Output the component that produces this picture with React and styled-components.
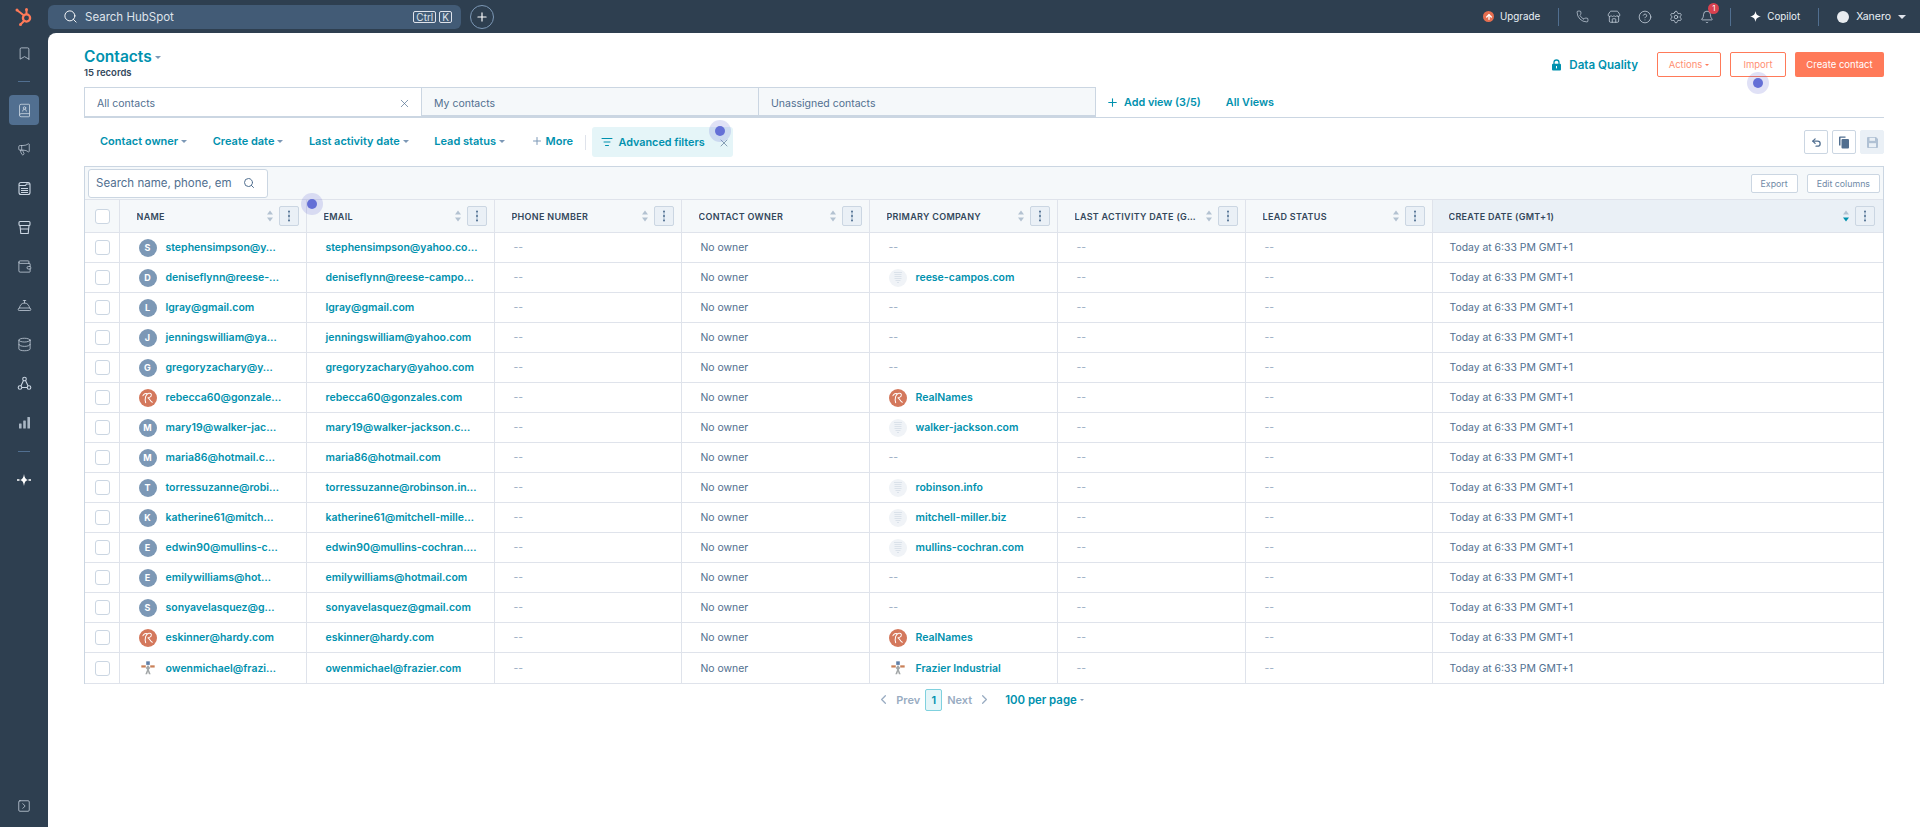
import styled, { createGlobalStyle } from 'styled-components'
import {
  Bookmark, BookUser, Megaphone, Wallet, ConciergeBell, Database,
  SquareChevronRight, Search, Plus, X, Phone, Store, CircleHelp,
  Settings, Bell, ListFilter, Undo2, ChevronLeft, ChevronRight, ArrowUp,
} from 'lucide-react'

const GlobalStyle = createGlobalStyle`
    html, body { margin: 0; padding: 0; background: #fff; }
    body { font-family: "Inter", "Noto Sans", "Liberation Sans", sans-serif; color: #33475b; }
    * { box-sizing: border-box; }
`

const rows = [
  ['S', 'stephensimpson@y…', 'stephensimpson@yahoo.co…', null],
  ['D', 'deniseflynn@reese-…', 'deniseflynn@reese-campo…', ['plain', 'reese-campos.com']],
  ['L', 'lgray@gmail.com', 'lgray@gmail.com', null],
  ['J', 'jenningswilliam@ya…', 'jenningswilliam@yahoo.com', null],
  ['G', 'gregoryzachary@y…', 'gregoryzachary@yahoo.com', null],
  ['real', 'rebecca60@gonzale…', 'rebecca60@gonzales.com', ['real', 'RealNames']],
  ['M', 'mary19@walker-jac…', 'mary19@walker-jackson.c…', ['plain', 'walker-jackson.com']],
  ['M', 'maria86@hotmail.c…', 'maria86@hotmail.com', null],
  ['T', 'torressuzanne@robi…', 'torressuzanne@robinson.in…', ['plain', 'robinson.info']],
  ['K', 'katherine61@mitch…', 'katherine61@mitchell-mille…', ['plain', 'mitchell-miller.biz']],
  ['E', 'edwin90@mullins-c…', 'edwin90@mullins-cochran.…', ['plain', 'mullins-cochran.com']],
  ['E', 'emilywilliams@hot…', 'emilywilliams@hotmail.com', null],
  ['S', 'sonyavelasquez@g…', 'sonyavelasquez@gmail.com', null],
  ['real', 'eskinner@hardy.com', 'eskinner@hardy.com', ['real', 'RealNames']],
  ['frazier', 'owenmichael@frazi…', 'owenmichael@frazier.com', ['frazier', 'Frazier Industrial']],
]

const columns = [
  ['NAME', 187], ['EMAIL', 188], ['PHONE NUMBER', 187], ['CONTACT OWNER', 188],
  ['PRIMARY COMPANY', 188], ['LAST ACTIVITY DATE (G…', 188], ['LEAD STATUS', 187],
]

function SparkIcon({ size = 14 }) {
  return (
    <svg width={size} height={size} viewBox="0 0 16 16">
      <path d="M8 0c.6 4.6 2.6 7 8 8-5.400 1-7.400 3.400-8 8-.6-4.600-2.600-7-8-8 5.400-1 7.400-3.400 8-8z" fill="#fff" />
    </svg>
  )
}

function SideSpark() {
  return (
    <svg width="16" height="14" viewBox="0 0 16 14">
      <path d="M8 1c.4 3.600 1.500 5.400 3.800 6C9.500 7.600 8.400 9.400 8 13c-.4-3.600-1.500-5.400-3.800-6C6.500 6.400 7.600 4.600 8 1z" fill="#fff" />
      <path d="M1 7h2.500M12.500 7H15" stroke="#fff" strokeWidth="1.400" />
    </svg>
  )
}

function NewsIcon() {
  return (
    <svg width="15" height="15" viewBox="0 0 15 15" fill="none" stroke="currentColor" strokeWidth="1.100">
      <rect x="2" y="1.500" width="11" height="12" rx="2" />
      <path d="M2 4.500h6.500l1-1.500H13M4 7.500h7M4 9.500h7M4 11.500h7" />
    </svg>
  )
}

function TrayIcon() {
  return (
    <svg width="15" height="15" viewBox="0 0 15 15" fill="none" stroke="currentColor" strokeWidth="1.100">
      <rect x="2" y="1.500" width="11" height="4" rx="1" />
      <path d="M3 5.500l.8 8h7.400l.8-8M3.400 9h8.200" />
    </svg>
  )
}

function NodesIcon() {
  return (
    <svg width="15" height="15" viewBox="0 0 15 15" fill="none" stroke="currentColor" strokeWidth="1.100">
      <circle cx="7.500" cy="3" r="1.800" />
      <circle cx="3" cy="11.500" r="1.800" />
      <circle cx="12" cy="11.500" r="1.800" />
      <path d="M6.500 4.600 3.900 9.900M8.500 4.600l2.600 5.300M4.800 11.500h5.400" />
    </svg>
  )
}

function BarsIcon() {
  return (
    <svg width="15" height="15" viewBox="0 0 15 15" fill="#a9b6c4">
      <rect x="2" y="8.500" width="2.600" height="5" rx=".5" />
      <rect x="6.200" y="5.500" width="2.600" height="8" rx=".5" />
      <rect x="10.400" y="2" width="2.600" height="11.500" rx=".5" />
    </svg>
  )
}

function LockIcon() {
  return (
    <svg width="11" height="12" viewBox="0 0 11 12">
      <path d="M3 5V3.500a2.500 2.500 0 015 0V5" fill="none" stroke="#0091ae" strokeWidth="1.300" />
      <rect x="1" y="4.800" width="9" height="6.700" rx="1" fill="#0091ae" />
      <rect x="5" y="7" width="1" height="2.400" fill="#fff" />
    </svg>
  )
}

function CopyFill() {
  return (
    <svg width="12" height="13" viewBox="0 0 12 13">
      <path d="M1 1.500A1 1 0 012 .5h5.500v1.300H2.500V9.500H1z" fill="#516f90" />
      <rect x="3.500" y="3" width="7.500" height="9.500" rx="1" fill="#516f90" />
    </svg>
  )
}

function SaveFill() {
  return (
    <svg width="13" height="13" viewBox="0 0 13 13">
      <path d="M1 2a1 1 0 011-1h8l2 2v8a1 1 0 01-1 1H2a1 1 0 01-1-1z" fill="#b0c1d4" />
      <rect x="3.500" y="1.800" width="5.500" height="3" fill="#eaf0f6" />
      <rect x="3" y="7.200" width="7" height="4" fill="#eaf0f6" />
    </svg>
  )
}

function HubLogo() {
  return (
    <svg width="20" height="20" viewBox="0 0 20 20" fill="none" stroke="#ff7a59" strokeLinecap="round">
      <circle cx="12.500" cy="11" r="3.600" strokeWidth="2.300" />
      <path d="M12.500 7V3.500M10 8.500 3.500 3.500M10 14l-3 3" strokeWidth="2" />
      <circle cx="12.500" cy="2.500" r="1.500" fill="#ff7a59" stroke="none" />
      <circle cx="3" cy="3" r="1.500" fill="#ff7a59" stroke="none" />
      <circle cx="6.500" cy="17.500" r="1.500" fill="#ff7a59" stroke="none" />
    </svg>
  )
}

function RealLogo() {
  return (
    <svg width="14" height="14" viewBox="0 0 18 18" fill="none" stroke="#fff" strokeWidth="1.300" strokeLinecap="round">
      <path d="M6 15C4.500 10 6 3.500 10 2.800c4-.6 4.500 4 1 5.400-1 .4-2.500.4-2.500.4 2.500.2 3 4.600 6 5.800" />
      <path d="M2.500 6C3.500 3.500 6 2.500 8 3.500" />
    </svg>
  )
}

function BuildingDot() {
  return (
    <svg width="10" height="13" viewBox="0 0 10 13" fill="none" stroke="#dbe2ea" strokeWidth="1">
      <path d="M1 1.500h8M1.500 3.500h7M1.500 5.500h7M1.500 7.500h7M2.500 9.500h5M4 11.500h2" />
    </svg>
  )
}

function FrazierLogo() {
  return (
    <svg width="16" height="16" viewBox="0 0 18 18">
      <rect x="1.500" y="6" width="5" height="2.500" fill="#c98058" />
      <rect x="11.500" y="6" width="5" height="2.500" fill="#c98058" />
      <rect x="7" y="1.500" width="4" height="4" fill="#5f7fa8" />
      <path d="M9 5.500l2.500 3.500-1.500 2 2 5h-2l-1-3-1 3H6l2-5-1.500-2z" fill="#a3a7a8" />
    </svg>
  )
}

function SortIcon({ active }) {
  return (
    <svg width="8" height="14" viewBox="0 0 8 14">
      <path d="M4 1.500l3 4h-6z" fill="#b3c2d1" />
      <path d="M4 12.500l-3-4h6z" fill={active ? '#0091ae' : '#b3c2d1'} />
    </svg>
  )
}

function DotsIcon() {
  return (
    <svg width="4" height="12" viewBox="0 0 4 12">
      <path d="M2 1v10" stroke="#7c98b6" strokeWidth="0.700" />
      <circle cx="2" cy="1.500" r="1" fill="#516f90" />
      <circle cx="2" cy="6" r="1" fill="#516f90" />
      <circle cx="2" cy="10.500" r="1" fill="#516f90" />
    </svg>
  )
}

function RowAvatar({ kind }) {
  if (kind === 'real') return <Avatar $bg="#d4785c"><RealLogo /></Avatar>
  if (kind === 'frazier') return <Avatar $bg="transparent"><FrazierLogo /></Avatar>
  if (kind === 'plain') return <Avatar $bg="#f0f3f7"><BuildingDot /></Avatar>
  return <Avatar $bg="#7c98b6">{kind}</Avatar>
}

function HeadCell({ title, width, sorted }) {
  return (
    <Th $width={width} $sorted={sorted}>
      <HeadInner>
        <HeadTitle>{title}</HeadTitle>
        <SortIcon active={sorted} />
        <MenuBtn $sorted={sorted}><DotsIcon /></MenuBtn>
      </HeadInner>
    </Th>
  )
}

export default function App() {
  return (
    <Shell>
      <GlobalStyle />
      <TopBar>
        <LogoSlot><HubLogo /></LogoSlot>
        <SearchBar>
          <Search size={15} color="#fff" strokeWidth={1.500} />
          <SearchText>Search HubSpot</SearchText>
          <Kbd>Ctrl</Kbd>
          <Kbd>K</Kbd>
        </SearchBar>
        <PlusCircle><Plus size={14} color="#fff" /></PlusCircle>
        <TopRight>
          <UpgradeDot><ArrowUp size={8} color="#fff" strokeWidth={4} /></UpgradeDot>
          <TopText $size={9.800}>Upgrade</TopText>
          <TopSep $l={18} $r={8} />
          <IconSlot><Phone size={13} strokeWidth={1.300} /></IconSlot>
          <IconSlot><Store size={14} strokeWidth={1.300} /></IconSlot>
          <IconSlot><CircleHelp size={14} strokeWidth={1.300} /></IconSlot>
          <IconSlot><Settings size={14} strokeWidth={1.300} /></IconSlot>
          <IconSlot>
            <Bell size={14} strokeWidth={1.300} />
            <Badge>1</Badge>
          </IconSlot>
          <TopSep $l={8} $r={19} />
          <SparkIcon size={11} />
          <TopText $size={9.800}>Copilot</TopText>
          <TopSep $l={18} $r={18} />
          <UserDot />
          <TopText $size={10.500}>Xanero</TopText>
          <UserCaret><Caret $color="#dfe3eb" $size={4} /></UserCaret>
        </TopRight>
      </TopBar>

      <Sidebar>
        <SideIcon><Bookmark size={15} strokeWidth={1.200} /></SideIcon>
        <SideRule />
        <SideIcon $active><BookUser size={15} strokeWidth={1.300} /></SideIcon>
        <SideIcon><Megaphone size={14} strokeWidth={1.200} /></SideIcon>
        <SideIcon><NewsIcon /></SideIcon>
        <SideIcon><TrayIcon /></SideIcon>
        <SideIcon><Wallet size={15} strokeWidth={1.200} /></SideIcon>
        <SideIcon><ConciergeBell size={15} strokeWidth={1.200} /></SideIcon>
        <SideIcon><Database size={15} strokeWidth={1.200} /></SideIcon>
        <SideIcon><NodesIcon /></SideIcon>
        <SideIcon><BarsIcon /></SideIcon>
        <SideRule />
        <SideIcon><SideSpark /></SideIcon>
        <SideBottom><SquareChevronRight size={14} strokeWidth={1.300} /></SideBottom>
      </Sidebar>

      <Main>
        <PageHead>
          <div>
            <Title>Contacts<Caret $color="#7c98b6" $size={3.500} /></Title>
            <Records>15 records</Records>
          </div>
          <HeadActions>
            <DataQuality><LockIcon />Data Quality</DataQuality>
            <OutlineBtn $width={64}>Actions<Caret $color="#ff7a59" $size={2.500} /></OutlineBtn>
            <OutlineBtn $width={56}>Import</OutlineBtn>
            <SolidBtn>Create contact</SolidBtn>
          </HeadActions>
        </PageHead>

        <Tabs>
          <Tab $active>All contacts<X size={13} color="#516f90" strokeWidth={1.300} /></Tab>
          <Tab>My contacts</Tab>
          <Tab>Unassigned contacts</Tab>
          <AddView><Plus size={13} color="#0091ae" />Add view (3/5)</AddView>
          <AddView $gap>All Views</AddView>
        </Tabs>

        <Filters>
          <FilterLink>Contact owner<Caret $color="#7c98b6" $size={3} /></FilterLink>
          <FilterLink>Create date<Caret $color="#7c98b6" $size={3} /></FilterLink>
          <FilterLink>Last activity date<Caret $color="#7c98b6" $size={3} /></FilterLink>
          <FilterLink>Lead status<Caret $color="#7c98b6" $size={3} /></FilterLink>
          <FilterLink><MorePlus><Plus size={12} color="#7c98b6" /></MorePlus>More</FilterLink>
          <FilterSep />
          <AdvFilter>
            <ListFilter size={12} color="#0091ae" />
            <span>Advanced filters</span>
            <AdvClose><X size={12} color="#516f90" strokeWidth={1.300} /></AdvClose>
          </AdvFilter>
          <ViewTools>
            <ToolBtn><Undo2 size={11} strokeWidth={2.800} /></ToolBtn>
            <ToolBtn><CopyFill /></ToolBtn>
            <ToolBtn $disabled><SaveFill /></ToolBtn>
          </ViewTools>
        </Filters>

        <TableWrap>
          <TableBar>
            <TableSearch>
              <span>Search name, phone, em</span>
              <Search size={12} color="#516f90" />
            </TableSearch>
            <SmallBtn>Export</SmallBtn>
            <SmallBtn>Edit columns</SmallBtn>
          </TableBar>
          <Table>
            <thead>
              <tr>
                <CheckTh><Check /></CheckTh>
                {columns.map(([title, width]) => <HeadCell key={title} title={title} width={width} />)}
                <HeadCell title="CREATE DATE (GMT+1)" sorted />
              </tr>
            </thead>
            <tbody>
              {rows.map(([kind, name, email, company], i) => (
                <tr key={i}>
                  <CheckTd><Check /></CheckTd>
                  <Td>
                    <Cell>
                      <RowAvatar kind={kind} />
                      <Link>{name}</Link>
                    </Cell>
                  </Td>
                  <Td><Link>{email}</Link></Td>
                  <Td><Dash>--</Dash></Td>
                  <Td>No owner</Td>
                  <Td>
                    {company ? (
                      <Cell>
                        <RowAvatar kind={company[0]} />
                        <Link>{company[1]}</Link>
                      </Cell>
                    ) : <Dash>--</Dash>}
                  </Td>
                  <Td><Dash>--</Dash></Td>
                  <Td><Dash>--</Dash></Td>
                  <Td>Today at 6:33 PM GMT+1</Td>
                </tr>
              ))}
            </tbody>
          </Table>
        </TableWrap>

        <Pager>
          <ChevronLeft size={15} color="#99acc2" />
          <PagerText>Prev</PagerText>
          <PageNum>1</PageNum>
          <PagerText>Next</PagerText>
          <ChevronRight size={15} color="#99acc2" />
          <PerPage>100 per page<Caret $color="#7c98b6" $size={2.500} /></PerPage>
        </Pager>
      </Main>

      <Beacon $x={312} $y={204} />
      <Beacon $x={720} $y={131} />
      <Beacon $x={1758} $y={83} />
    </Shell>
  )
}

const Shell = styled.div`
    position: relative;
    display: grid;
    grid-template-columns: 48px 1fr;
    grid-template-rows: 33px 1fr;
    width: 1920px;
    height: 827px;
    overflow: hidden;
    background-color: #2e3f50;
`

const TopBar = styled.header`
    grid-column: 1 / 3;
    display: flex;
    align-items: center;
    color: #fff;
`

const LogoSlot = styled.div`
    display: flex;
    justify-content: center;
    width: 48px;
`

const SearchBar = styled.div`
    display: flex;
    align-items: center;
    gap: 3px;
    width: 413px;
    height: 24px;
    padding: 0 9px 0 15px;
    border-radius: 6px;
    background-color: #425b76;
`

const SearchText = styled.span`
    flex: 1;
    margin-left: 4px;
    font-size: 11.500px;
    color: #dfe3eb;
`

const Kbd = styled.span`
    height: 12px;
    padding: 0 2px;
    border: 1px solid #dfe3eb;
    border-radius: 2px;
    font-size: 10px;
    line-height: 10px;
    color: #dfe3eb;
`

const PlusCircle = styled.div`
    display: flex;
    align-items: center;
    justify-content: center;
    width: 24px;
    height: 24px;
    margin-left: 9px;
    border: 1px solid #7c98b6;
    border-radius: 50%;
`

const TopRight = styled.div`
    display: flex;
    align-items: center;
    margin-left: auto;
    margin-right: 14px;
`

const UpgradeDot = styled.div`
    display: flex;
    align-items: center;
    justify-content: center;
    width: 11px;
    height: 11px;
    border-radius: 50%;
    background-color: #e66e50;
`

const TopText = styled.span`
    margin-left: 6px;
    font-size: ${(props) => props.$size}px;
    color: #eaf0f6;
`

const TopSep = styled.div`
    width: 1px;
    height: 18px;
    margin: 0 ${(props) => props.$r}px 0 ${(props) => props.$l}px;
    background-color: #516f90;
`

const IconSlot = styled.div`
    position: relative;
    display: flex;
    justify-content: center;
    width: 31px;
    color: #cbd6e2;
`

const Badge = styled.span`
    position: absolute;
    top: -7px;
    left: 17px;
    width: 11px;
    height: 11px;
    border-radius: 50%;
    background-color: #d9414f;
    font-size: 8px;
    line-height: 11px;
    text-align: center;
    color: #fff;
`

const UserDot = styled.div`
    width: 12px;
    height: 12px;
    margin-right: 1px;
    border-radius: 50%;
    background-color: #e8ecf0;
`

const UserCaret = styled.span`
    display: flex;
    margin-left: 4px;
`

const Caret = styled.span`
    display: inline-block;
    margin-left: 3px;
    border-left: ${(props) => props.$size}px solid transparent;
    border-right: ${(props) => props.$size}px solid transparent;
    border-top: ${(props) => props.$size}px solid ${(props) => props.$color};
    vertical-align: middle;
`

const Sidebar = styled.nav`
    display: flex;
    flex-direction: column;
    align-items: center;
    color: #cbd6e2;
`

const SideIcon = styled.div`
    display: flex;
    align-items: center;
    justify-content: center;
    flex: 0 0 auto;
    width: 30px;
    height: 30px;
    margin-bottom: 9px;
    border-radius: 4px;
    background-color: ${(props) => (props.$active ? '#516f90' : 'transparent')};
    &:first-child { margin-top: 5px; margin-bottom: 13px; }
`

const SideRule = styled.div`
    flex: 0 0 auto;
    width: 12px;
    height: 1px;
    margin-bottom: 13px;
    background-color: #516f90;
    &:nth-last-child(3) { margin-top: 5px; margin-bottom: 13px; }
`

const SideBottom = styled.div`
    display: flex;
    justify-content: center;
    margin-top: auto;
    margin-bottom: 14px;
`

const Main = styled.main`
    min-width: 0;
    padding: 0 36px;
    border-top-left-radius: 8px;
    background-color: #fff;
`

const PageHead = styled.div`
    display: flex;
    justify-content: space-between;
    height: 54px;
    padding-top: 14px;
`

const Title = styled.div`
    font-size: 15.500px;
    font-weight: 600;
    line-height: 20px;
    color: #0091ae;
`

const Records = styled.div`
    margin-top: -1px;
    font-size: 9.500px;
    font-weight: 600;
    line-height: 13px;
    color: #33475b;
`

const HeadActions = styled.div`
    display: flex;
    align-items: flex-start;
    gap: 9px;
    margin-top: 5px;
`

const DataQuality = styled.div`
    display: flex;
    align-items: center;
    gap: 7px;
    height: 25px;
    margin-right: 10px;
    font-size: 11.600px;
    font-weight: 600;
    color: #0091ae;
`

const OutlineBtn = styled.div`
    display: flex;
    align-items: center;
    justify-content: center;
    width: ${(props) => props.$width}px;
    height: 25px;
    border: 1px solid #ff7a59;
    border-radius: 2px;
    font-size: 9.500px;
    color: #ff8f73;
`

const SolidBtn = styled.div`
    display: flex;
    align-items: center;
    justify-content: center;
    width: 89px;
    height: 25px;
    border-radius: 2px;
    background-color: #ff7a59;
    font-size: 9.500px;
    color: #fff;
`

const Tabs = styled.div`
    display: flex;
    align-items: stretch;
    height: 31px;
    border-bottom: 1px solid #cbd6e2;
`

const Tab = styled.div`
    display: flex;
    align-items: center;
    justify-content: space-between;
    width: 338px;
    margin-right: -1px;
    padding: ${(props) => (props.$active ? '2px' : '3px')} 10px 0 12px;
    border: 1px solid #cbd6e2;
    border-bottom-width: ${(props) => (props.$active ? '1px' : '2px')};
    background-color: ${(props) => (props.$active ? '#fff' : '#f5f8fa')};
    font-size: 10.500px;
    color: #516f90;
`

const AddView = styled.div`
    display: flex;
    align-items: center;
    gap: 5px;
    margin-left: ${(props) => (props.$gap ? '25px' : '11px')};
    font-size: 10.800px;
    font-weight: 600;
    color: #0091ae;
`

const Filters = styled.div`
    display: flex;
    align-items: center;
    height: 48px;
    padding-left: 16px;
`

const FilterLink = styled.div`
    display: flex;
    align-items: center;
    margin-right: 25.500px;
    padding-bottom: 2px;
    font-size: 11px;
    font-weight: 600;
    color: #0091ae;
`

const MorePlus = styled.span`
    display: flex;
    margin-right: 3px;
`

const FilterSep = styled.div`
    width: 1px;
    height: 15px;
    margin: 0 6px 0 -14px;
    background-color: #dfe3eb;
`

const AdvFilter = styled.div`
    position: relative;
    display: flex;
    align-items: center;
    gap: 6px;
    width: 141px;
    height: 30px;
    padding-left: 9px;
    border-radius: 3px;
    background-color: #e5f5f8;
    font-size: 10.800px;
    font-weight: 600;
    color: #0091ae;
`

const AdvClose = styled.span`
    position: absolute;
    right: 3px;
    top: 10px;
`

const ViewTools = styled.div`
    display: flex;
    gap: 4px;
    margin-left: auto;
`

const ToolBtn = styled.div`
    display: flex;
    align-items: center;
    justify-content: center;
    width: 24px;
    height: 24px;
    border: 1px solid ${(props) => (props.$disabled ? '#eaf0f6' : '#cbd6e2')};
    border-radius: 2px;
    background-color: ${(props) => (props.$disabled ? '#eaf0f6' : '#fff')};
    color: #516f90;
`

const TableWrap = styled.div`
    border: 1px solid #cbd6e2;
    border-bottom: 0;
`

const TableBar = styled.div`
    display: flex;
    align-items: center;
    gap: 9px;
    height: 32px;
    padding: 0 3px;
    background-color: #f5f8fa;
`

const TableSearch = styled.div`
    display: flex;
    align-items: center;
    justify-content: space-between;
    width: 180px;
    height: 29px;
    margin-right: auto;
    padding: 0 12px 0 7px;
    border: 1px solid #cbd6e2;
    border-radius: 3px;
    background-color: #fff;
    font-size: 11.500px;
    color: #516f90;
`

const SmallBtn = styled.div`
    display: flex;
    align-items: center;
    height: 19px;
    padding: 0 9px;
    border: 1px solid #cbd6e2;
    border-radius: 2px;
    background-color: #fff;
    font-size: 8.800px;
    color: #6f8aa6;
`

const Table = styled.table`
    width: 100%;
    border-collapse: collapse;
    table-layout: fixed;
    tbody tr { height: 30px; }
    tbody tr:last-child { height: 31px; }
`

const Th = styled.th`
    width: ${(props) => (props.$width ? `${props.$width}px` : 'auto')};
    height: 33px;
    padding: 0 ${(props) => (props.$sorted ? '8px' : '7px')} 0 ${(props) => (props.$sorted ? '16px' : '17px')};
    border: 1px solid #dfe3eb;
    background-color: ${(props) => (props.$sorted ? '#eaf0f6' : '#f5f8fa')};
    text-align: left;
    &:last-child { border-right: 0; }
`

const CheckTh = styled.th`
    width: 34px;
    padding: 0 0 0 10px;
    border: 1px solid #dfe3eb;
    border-left: 0;
    background-color: #f5f8fa;
    text-align: left;
`

const HeadInner = styled.div`
    display: flex;
    align-items: center;
    gap: 5px;
`

const HeadTitle = styled.span`
    flex: 1;
    overflow: hidden;
    white-space: nowrap;
    font-size: 9px;
    font-weight: 600;
    letter-spacing: 0.3px;
    color: #33475b;
`

const MenuBtn = styled.div`
    display: flex;
    align-items: center;
    justify-content: center;
    flex: 0 0 auto;
    width: 20px;
    height: 20px;
    border: 1px solid #cbd6e2;
    border-radius: 2px;
    background-color: ${(props) => (props.$sorted ? 'transparent' : '#eaf0f6')};
`

const Td = styled.td`
    padding: 0 0 0 19px;
    border: 1px solid #dfe3eb;
    background-color: #fff;
    font-size: 10.400px;
    white-space: nowrap;
    color: #516f90;
    &:last-child { padding-left: 17px; border-right: 0; }
`

const CheckTd = styled.td`
    padding: 0 0 0 10px;
    border: 1px solid #dfe3eb;
    border-left: 0;
    background-color: #fff;
`

const Check = styled.div`
    width: 15px;
    height: 15px;
    border: 1px solid #cbd6e2;
    border-radius: 3px;
    background-color: #fff;
`

const Cell = styled.div`
    display: flex;
    align-items: center;
    gap: 9px;
`

const Avatar = styled.div`
    display: flex;
    align-items: center;
    justify-content: center;
    flex: 0 0 auto;
    width: 18px;
    height: 18px;
    border-radius: 50%;
    background-color: ${(props) => props.$bg};
    font-size: 9px;
    font-weight: 700;
    color: #fff;
`

const Link = styled.span`
    font-size: 10.500px;
    font-weight: 600;
    color: #0091ae;
`

const Dash = styled.span`
    color: #99acc2;
`

const Pager = styled.div`
    display: flex;
    align-items: center;
    justify-content: center;
    height: 31px;
    padding-right: 8px;
`

const PagerText = styled.span`
    margin: 0 5px;
    font-size: 11px;
    font-weight: 600;
    color: #99acc2;
`

const PageNum = styled.div`
    width: 17px;
    height: 22px;
    border: 1px solid #7fd1de;
    border-radius: 2px;
    background-color: #e5f5f8;
    font-size: 11px;
    font-weight: 600;
    line-height: 20px;
    text-align: center;
    color: #0091ae;
`

const PerPage = styled.div`
    margin-left: 13px;
    font-size: 11.400px;
    font-weight: 600;
    color: #0091ae;
`

const Beacon = styled.div`
    position: absolute;
    left: ${(props) => props.$x - 11}px;
    top: ${(props) => props.$y - 11}px;
    width: 22px;
    height: 22px;
    border-radius: 50%;
    background-color: rgba(98, 107, 210, 0.2);
    &::after {
        content: "";
        position: absolute;
        left: 6px;
        top: 6px;
        width: 10px;
        height: 10px;
        border-radius: 50%;
        background-color: #646fd6;
    }
`
